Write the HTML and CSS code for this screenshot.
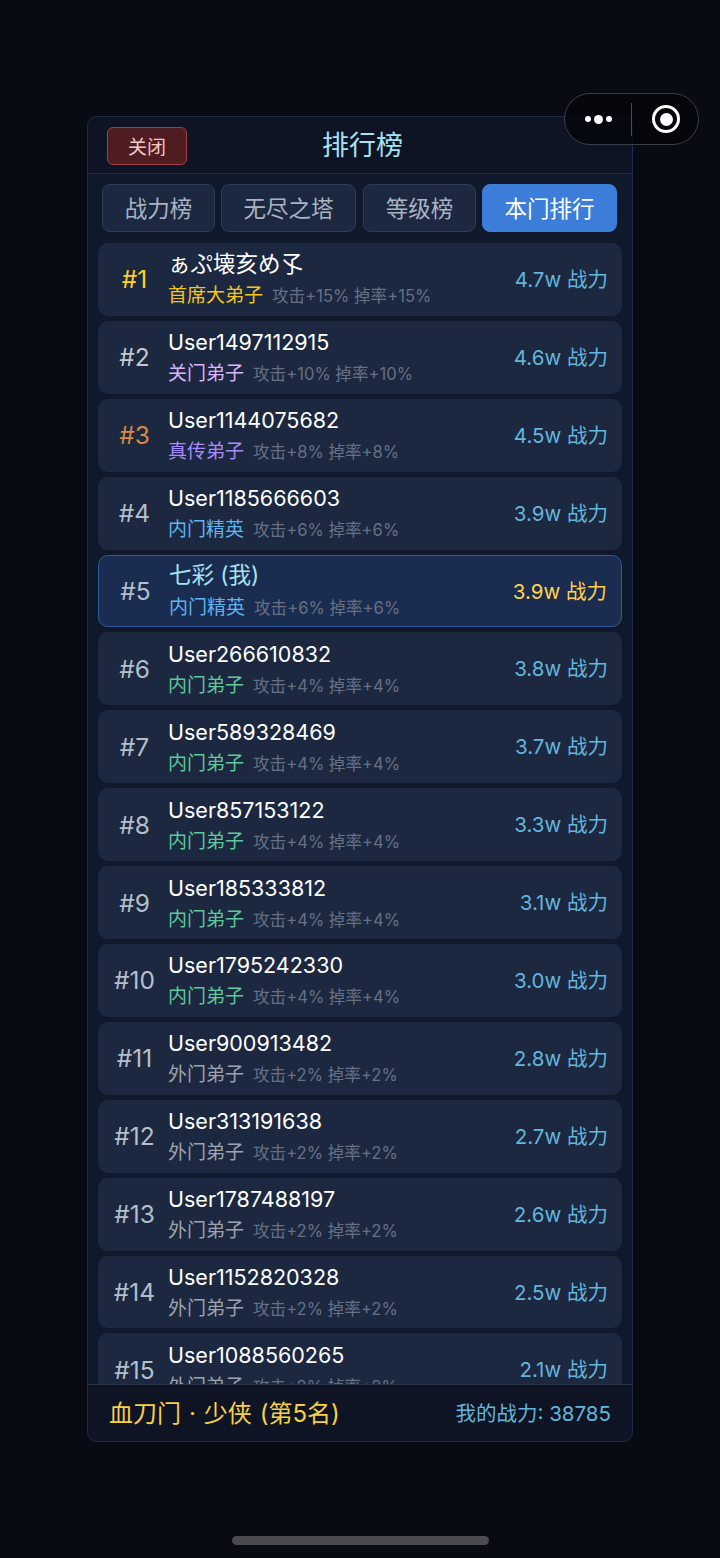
FILE: index.html
```html
<!DOCTYPE html>
<html lang="zh-CN">
<head>
  <meta charset="UTF-8" />
  <meta name="viewport" content="width=device-width, initial-scale=1.0"/>
  <title>排行榜</title>
  <link rel="stylesheet" href="styles.css">
</head>
<body>

  <div class="capsule">
    <div class="capsule-more"><i></i><i class="big"></i><i></i></div>
    <div class="capsule-line"></div>
    <div class="capsule-close"><b></b></div>
  </div>

  <div class="panel">
    <div class="header">
      <div class="close-btn">关闭</div>
      <div class="title">排行榜</div>
    </div>

    <div class="tabs">
      <div class="tab tab-a">战力榜</div>
      <div class="tab tab-b">无尽之塔</div>
      <div class="tab tab-c">等级榜</div>
      <div class="tab tab-d active">本门排行</div>
    </div>

    <div class="list">
      <div class="row">
        <div class="rank gold">#1</div>
        <div class="info">
          <div class="name cjk">ぁぷ壊亥め孓</div>
          <div class="sub"><span class="role c-gold">首席大弟子</span><span class="buff">攻击+15% 掉率+15%</span></div>
        </div>
        <div class="power">4.7w 战力</div>
      </div>
      <div class="row">
        <div class="rank silver">#2</div>
        <div class="info">
          <div class="name">User1497112915</div>
          <div class="sub"><span class="role c-pink">关门弟子</span><span class="buff">攻击+10% 掉率+10%</span></div>
        </div>
        <div class="power">4.6w 战力</div>
      </div>
      <div class="row">
        <div class="rank bronze">#3</div>
        <div class="info">
          <div class="name">User1144075682</div>
          <div class="sub"><span class="role c-purple">真传弟子</span><span class="buff">攻击+8% 掉率+8%</span></div>
        </div>
        <div class="power">4.5w 战力</div>
      </div>
      <div class="row">
        <div class="rank">#4</div>
        <div class="info">
          <div class="name">User1185666603</div>
          <div class="sub"><span class="role c-blue">内门精英</span><span class="buff">攻击+6% 掉率+6%</span></div>
        </div>
        <div class="power">3.9w 战力</div>
      </div>
      <div class="row me">
        <div class="rank">#5</div>
        <div class="info">
          <div class="name cjk">七彩 (我)</div>
          <div class="sub"><span class="role c-blue">内门精英</span><span class="buff">攻击+6% 掉率+6%</span></div>
        </div>
        <div class="power">3.9w 战力</div>
      </div>
      <div class="row">
        <div class="rank">#6</div>
        <div class="info">
          <div class="name">User266610832</div>
          <div class="sub"><span class="role c-green">内门弟子</span><span class="buff">攻击+4% 掉率+4%</span></div>
        </div>
        <div class="power">3.8w 战力</div>
      </div>
      <div class="row">
        <div class="rank">#7</div>
        <div class="info">
          <div class="name">User589328469</div>
          <div class="sub"><span class="role c-green">内门弟子</span><span class="buff">攻击+4% 掉率+4%</span></div>
        </div>
        <div class="power">3.7w 战力</div>
      </div>
      <div class="row">
        <div class="rank">#8</div>
        <div class="info">
          <div class="name">User857153122</div>
          <div class="sub"><span class="role c-green">内门弟子</span><span class="buff">攻击+4% 掉率+4%</span></div>
        </div>
        <div class="power">3.3w 战力</div>
      </div>
      <div class="row">
        <div class="rank">#9</div>
        <div class="info">
          <div class="name">User185333812</div>
          <div class="sub"><span class="role c-green">内门弟子</span><span class="buff">攻击+4% 掉率+4%</span></div>
        </div>
        <div class="power">3.1w 战力</div>
      </div>
      <div class="row">
        <div class="rank">#10</div>
        <div class="info">
          <div class="name">User1795242330</div>
          <div class="sub"><span class="role c-green">内门弟子</span><span class="buff">攻击+4% 掉率+4%</span></div>
        </div>
        <div class="power">3.0w 战力</div>
      </div>
      <div class="row">
        <div class="rank">#11</div>
        <div class="info">
          <div class="name">User900913482</div>
          <div class="sub"><span class="role c-gray">外门弟子</span><span class="buff">攻击+2% 掉率+2%</span></div>
        </div>
        <div class="power">2.8w 战力</div>
      </div>
      <div class="row">
        <div class="rank">#12</div>
        <div class="info">
          <div class="name">User313191638</div>
          <div class="sub"><span class="role c-gray">外门弟子</span><span class="buff">攻击+2% 掉率+2%</span></div>
        </div>
        <div class="power">2.7w 战力</div>
      </div>
      <div class="row">
        <div class="rank">#13</div>
        <div class="info">
          <div class="name">User1787488197</div>
          <div class="sub"><span class="role c-gray">外门弟子</span><span class="buff">攻击+2% 掉率+2%</span></div>
        </div>
        <div class="power">2.6w 战力</div>
      </div>
      <div class="row">
        <div class="rank">#14</div>
        <div class="info">
          <div class="name">User1152820328</div>
          <div class="sub"><span class="role c-gray">外门弟子</span><span class="buff">攻击+2% 掉率+2%</span></div>
        </div>
        <div class="power">2.5w 战力</div>
      </div>
      <div class="row">
        <div class="rank">#15</div>
        <div class="info">
          <div class="name">User1088560265</div>
          <div class="sub"><span class="role c-gray">外门弟子</span><span class="buff">攻击+2% 掉率+2%</span></div>
        </div>
        <div class="power">2.1w 战力</div>
      </div>
    </div>

    <div class="footer">
      <div class="my-sect">血刀门 · 少侠 (第5名)</div>
      <div class="my-power">我的战力: 38785</div>
    </div>
  </div>

  <div class="home-bar"></div>

</body>
</html>
```

FILE: styles.css
```css
* {
  box-sizing: border-box;
}

html, body {
  height: 100%;
}

body {
  margin: 0;
  padding: 116px 87px 0;
  background: #080b14;
  font-family: "Inter", "Noto Sans CJK SC", sans-serif;
  overflow: hidden;
}

/* wechat capsule */
.capsule {
  position: absolute;
  left: 564px;
  top: 93px;
  width: 135px;
  height: 52px;
  display: flex;
  align-items: center;
  background: rgba(4, 5, 10, 0.8);
  border: 1px solid #3b3d44;
  border-radius: 26px;
  z-index: 5;
}

.capsule-more {
  width: 66px;
  display: flex;
  align-items: center;
  justify-content: center;
  gap: 3px;
}

.capsule-more i {
  width: 6px;
  height: 6px;
  border-radius: 50%;
  background: #fff;
}

.capsule-more i.big {
  width: 9px;
  height: 9px;
}

.capsule-line {
  width: 1px;
  height: 33px;
  background: #4b4d53;
}

.capsule-close {
  flex: 1;
  display: flex;
  justify-content: center;
  padding-left: 2px;
}

.capsule-close b {
  width: 28px;
  height: 28px;
  border: 3px solid #fff;
  border-radius: 50%;
  display: flex;
  align-items: center;
  justify-content: center;
}

.capsule-close b::after {
  content: "";
  width: 13px;
  height: 13px;
  border-radius: 50%;
  background: #fff;
}

.panel {
  width: 546px;
  height: 1326px;
  display: flex;
  flex-direction: column;
  background: #10182b;
  border: 1px solid #1f2d4a;
  border-radius: 10px;
  overflow: hidden;
}

.header {
  height: 57px;
  flex-shrink: 0;
  display: flex;
  align-items: center;
  justify-content: center;
  position: relative;
  background: #0e1424;
  border-bottom: 1px solid #252d40;
}

.close-btn {
  position: absolute;
  left: 19px;
  top: 10px;
  width: 80px;
  height: 38px;
  display: flex;
  align-items: center;
  justify-content: center;
  padding-bottom: 2px;
  background: #4f1c22;
  border: 1px solid #a33b4a;
  border-radius: 6px;
  color: #f4c6c6;
  font-size: 19px;
}

.title {
  color: #a4e2f5;
  font-size: 27px;
  margin-left: 5px;
  margin-bottom: 3px;
}

.tabs {
  flex-shrink: 0;
  display: flex;
  gap: 6px;
  padding: 10px 15px 0 14px;
}

.tab {
  height: 48px;
  display: flex;
  align-items: center;
  justify-content: center;
  padding-bottom: 3px;
  background: #1b2840;
  border: 1px solid #2f3c54;
  border-radius: 8px;
  color: #a9b3c2;
  font-size: 22.5px;
}

.tab-a { width: 113px; }
.tab-b { width: 135px; }
.tab-c { width: 113px; margin-left: 1px; }
.tab-d { width: 135px; }

.tab.active {
  background: #3b7dd8;
  border-color: #3b7dd8;
  color: #fff;
}

.list {
  flex: 1;
  min-height: 0;
  overflow: hidden;
  display: flex;
  flex-direction: column;
  gap: 5px;
  padding: 11px 10px 0;
}

.row {
  height: 72.9px;
  flex-shrink: 0;
  display: flex;
  align-items: center;
  padding: 0 14px 0 10px;
  background: #1b2840;
  border-radius: 10px;
}

.row.me {
  background: #1a2d50;
  border: 1px solid #2f5a9a;
}

.rank {
  width: 53px;
  text-align: center;
  color: #b4bfcc;
  font-size: 24.5px;
  flex-shrink: 0;
}

.rank.gold { color: #ffd21e; }
.rank.silver { color: #c4cad4; }
.rank.bronze { color: #d98a3d; }

.info {
  flex: 1;
  min-width: 0;
  margin-left: 7px;
}

.name {
  color: #fff;
  font-size: 21.5px;
  line-height: 30px;
}

.name.cjk {
  font-size: 22.5px;
}

.me .name {
  color: #a4e2f5;
  margin-top: -2px;
}

.sub {
  display: flex;
  align-items: baseline;
  margin-top: 4px;
  line-height: 26px;
}

.me .sub {
  margin-top: 5px;
}

.role {
  font-size: 19px;
  margin-right: 9px;
}

.c-gold { color: #f5c518; }
.c-pink { color: #d8b4fe; }
.c-purple { color: #a78bfa; }
.c-blue { color: #60b4f0; }
.c-green { color: #5fc79a; }
.c-gray { color: #9ca3af; }

.buff {
  color: #667085;
  font-size: 16.6px;
}

.power {
  flex-shrink: 0;
  margin-bottom: 3px;
  color: #64b5dc;
  font-size: 20.5px;
}

.me .power {
  color: #ffd24a;
}

.footer {
  height: 57px;
  flex-shrink: 0;
  display: flex;
  align-items: center;
  justify-content: space-between;
  padding: 0 21px 3px 21px;
  background: #0e1424;
  border-top: 1px solid #2a3245;
}

.my-sect {
  color: #f7d046;
  font-size: 24px;
  word-spacing: 1.2px;
}

.my-power {
  color: #64b5dc;
  font-size: 20.5px;
}

.home-bar {
  position: absolute;
  left: 232px;
  top: 1536px;
  width: 257px;
  height: 9px;
  border-radius: 5px;
  background: #4a4b50;
}
```
